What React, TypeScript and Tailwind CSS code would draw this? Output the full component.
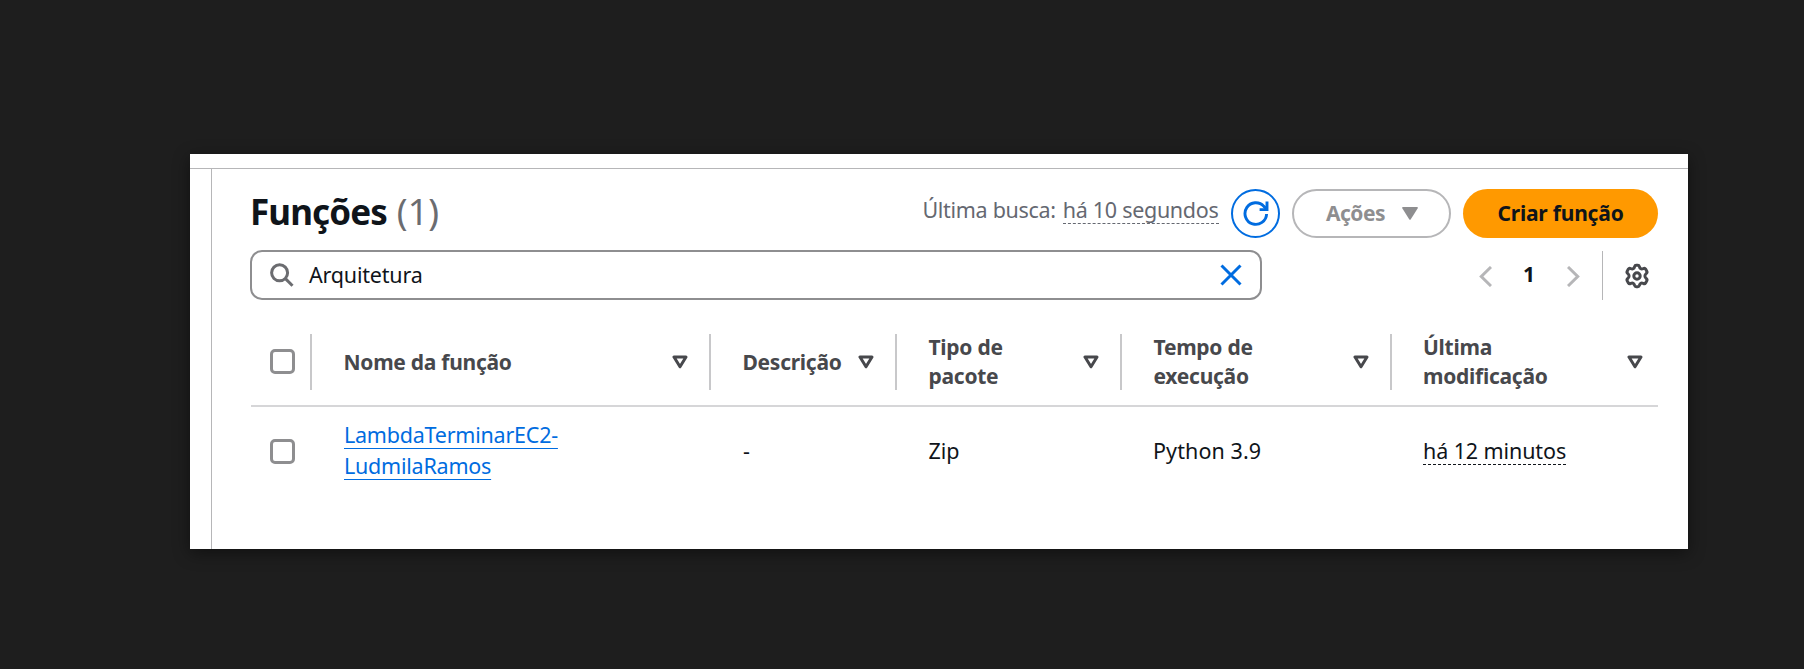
import type { ReactNode } from 'react';

function SortIcon() {
  return (
    <svg width="16" height="14" viewBox="0 0 16 14" fill="none" stroke="#47484c" strokeWidth="3" strokeLinejoin="round" className="shrink-0">
      <path d="M2 2H14L8 11.8Z" />
    </svg>
  );
}

function Checkbox() {
  return <span className="h-[25px] w-[25px] shrink-0 rounded-[5px] border-[3px] border-[#8e8e90] bg-white" />;
}

function HeaderCell({ children, last = false }: { children: ReactNode; last?: boolean }) {
  return (
    <div className={last ? 'flex h-14 items-center justify-between pl-[31px] pr-[15px]' : 'flex h-14 items-center justify-between border-r-2 border-[#c8c8ca] pl-[31.5px] pr-[21px]'}>
      <span className="text-[21px] leading-[29px] font-bold tracking-[-0.27px] whitespace-nowrap text-[#47484c]">{children}</span>
      <SortIcon />
    </div>
  );
}

const columns = 'grid grid-cols-[61px_399px_186px_225px_270px_266px] items-center';

export default function App() {
  return (
    <main className="h-[669px] w-[1804px] overflow-hidden bg-[#1e1e1e] pl-[190px] pt-[154px] font-['Noto_Sans','Open_Sans',sans-serif] text-[#0f141a]">
      <section className="h-[395px] w-[1498px] bg-white pt-[14px] shadow-[0_4px_16px_rgba(0,0,0,0.45)]">
        <div className="h-[381px] border-t border-[#b6b6b8] pl-[21px]">
          <div className="h-full border-l border-[#b6b6b8] pl-[39px] pr-[30px] pt-5">
            <header className="flex h-[49px] items-center justify-between">
              <h1 className="flex items-center gap-[10px] pb-1 text-[35px] leading-[45px]">
                <span className="-ml-px font-bold tracking-[-0.9px]">Funções</span>
                <span className="text-[36px] text-[#6b6c70]">(1)</span>
              </h1>
              <div className="flex items-center">
                <p className="mr-[12.5px] flex gap-[7px] pb-[6px] text-[21.5px] leading-[26px] tracking-[-0.3px] text-[#656871]">
                  <span>Última busca:</span>
                  <span className="border-b border-dashed border-[#656871]">há 10 segundos</span>
                </p>
                <button className="mr-3 flex h-[49px] w-[49px] items-center justify-center rounded-full border-2 border-[#006ce0]">
                  <svg width="26" height="26" viewBox="0 0 26 26" fill="none" stroke="#006ce0" strokeWidth="2.9">
                    <path d="M23.6 13A10.8 10.8 0 1 1 20.9 5.4L23.6 8" />
                    <path d="M24 .6V8.6H16.6" />
                  </svg>
                </button>
                <button className="mr-3 flex h-[49px] w-[159px] items-center rounded-full border-2 border-[#b6b6b8] pl-8 text-[21px] font-bold text-[#8e8e90]">
                  <span className="tracking-[-0.5px]">Ações</span>
                  <svg width="16" height="13" viewBox="0 0 16 13" fill="#8e8e90" className="ml-[17px]">
                    <path d="M1 0H15Q16.4 .2 15.6 1.5L8.8 12.2Q8 13.2 7.2 12.2L.4 1.5Q-.4 .2 1 0Z" />
                  </svg>
                </button>
                <button className="flex h-[49px] w-[195px] items-center justify-center rounded-full bg-[#ff9900] text-[21px] font-bold">
                  <span className="tracking-[-0.2px]">Criar função</span>
                </button>
              </div>
            </header>

            <div className="mt-3 flex h-[50px] items-center justify-between">
              <div className="-ml-px flex h-[50px] w-[1012px] items-center rounded-[12px] border-2 border-[#8e8e90] pl-[18px] pr-[18px]">
                <svg width="24" height="24" viewBox="0 0 24 24" fill="none" stroke="#6b6c70" strokeWidth="3">
                  <circle cx="9.6" cy="9.8" r="8" />
                  <path d="M15.2 15.4L22.5 22.7" />
                </svg>
                <span className="ml-[15px] flex-1 text-[21.5px] tracking-[-0.2px]">Arquitetura</span>
                <svg width="22" height="22" viewBox="0 0 22 22" fill="none" stroke="#006ce0" strokeWidth="3">
                  <path d="M1.5 1.5L20.5 20.5M20.5 1.5L1.5 20.5" />
                </svg>
              </div>
              <div className="flex items-center">
                <svg width="13" height="21" viewBox="0 0 13 21" fill="none" stroke="#b6b6b8" strokeWidth="3" className="mt-[2px]">
                  <path d="M12 1L2.3 10.5L12 20" />
                </svg>
                <span className="mr-8 ml-[31px] text-[21px] font-bold">1</span>
                <svg width="13" height="21" viewBox="0 0 13 21" fill="none" stroke="#b6b6b8" strokeWidth="3" className="mt-[2px]">
                  <path d="M1 1L10.7 10.5L1 20" />
                </svg>
                <span className="mr-[21px] ml-[22px] h-[49px] w-px bg-[#b6b6b8]" />
                <svg width="26" height="26" viewBox="0 0 26 26" fill="none" stroke="#47484c" strokeWidth="3" strokeLinejoin="round" className="mt-[2px] mr-2">
                  <circle cx="13" cy="13" r="3.2" />
                  <path d="M10.6 3.6Q11 2.3 12.2 2.3H13.8Q15 2.3 15.4 3.6Q16.2 6.8 19.2 5.6Q20.8 4.8 21.6 6.1L22.8 8.2Q23.5 9.5 22.2 10.5Q19.6 13 22.2 15.5Q23.5 16.5 22.8 17.8L21.6 19.9Q20.8 21.2 19.2 20.4Q16.2 19.2 15.4 22.4Q15 23.7 13.8 23.7H12.2Q11 23.7 10.6 22.4Q9.8 19.2 6.8 20.4Q5.2 21.2 4.4 19.9L3.2 17.8Q2.5 16.5 3.8 15.5Q6.4 13 3.8 10.5Q2.5 9.5 3.2 8.2L4.4 6.1Q5.2 4.8 6.8 5.6Q9.8 6.8 10.6 3.6Z" />
                </svg>
              </div>
            </div>

            <div className={`${columns} mt-[19px] h-[88px] border-b-2 border-[#d6d6d8]`}>
              <div className="flex h-14 items-center border-r-2 border-[#c8c8ca] pl-[19px] pb-px"><Checkbox /></div>
              <HeaderCell>Nome da função</HeaderCell>
              <HeaderCell>Descrição</HeaderCell>
              <HeaderCell>Tipo de<br />pacote</HeaderCell>
              <HeaderCell>Tempo de<br />execução</HeaderCell>
              <HeaderCell last>Última<br />modificação</HeaderCell>
            </div>

            <div className={`${columns} h-[89px] text-[21.5px] tracking-[-0.1px]`}>
              <div className="flex items-center pl-[19px]"><Checkbox /></div>
              <div className="pb-1 pl-8 leading-[31px]">
                <a className="tracking-[-0.23px] text-[#006ce0] underline decoration-1 underline-offset-[5px]">LambdaTerminarEC2-<br />LudmilaRamos</a>
              </div>
              <div className="pl-8">-</div>
              <div className="pl-[31.5px]">Zip</div>
              <div className="pl-[31px] tracking-[0.1px]">Python 3.9</div>
              <div className="pl-[31px]"><span className="inline-block border-b border-dashed border-[#0f141a] leading-[27px]">há 12 minutos</span></div>
            </div>
          </div>
        </div>
      </section>
    </main>
  );
}
